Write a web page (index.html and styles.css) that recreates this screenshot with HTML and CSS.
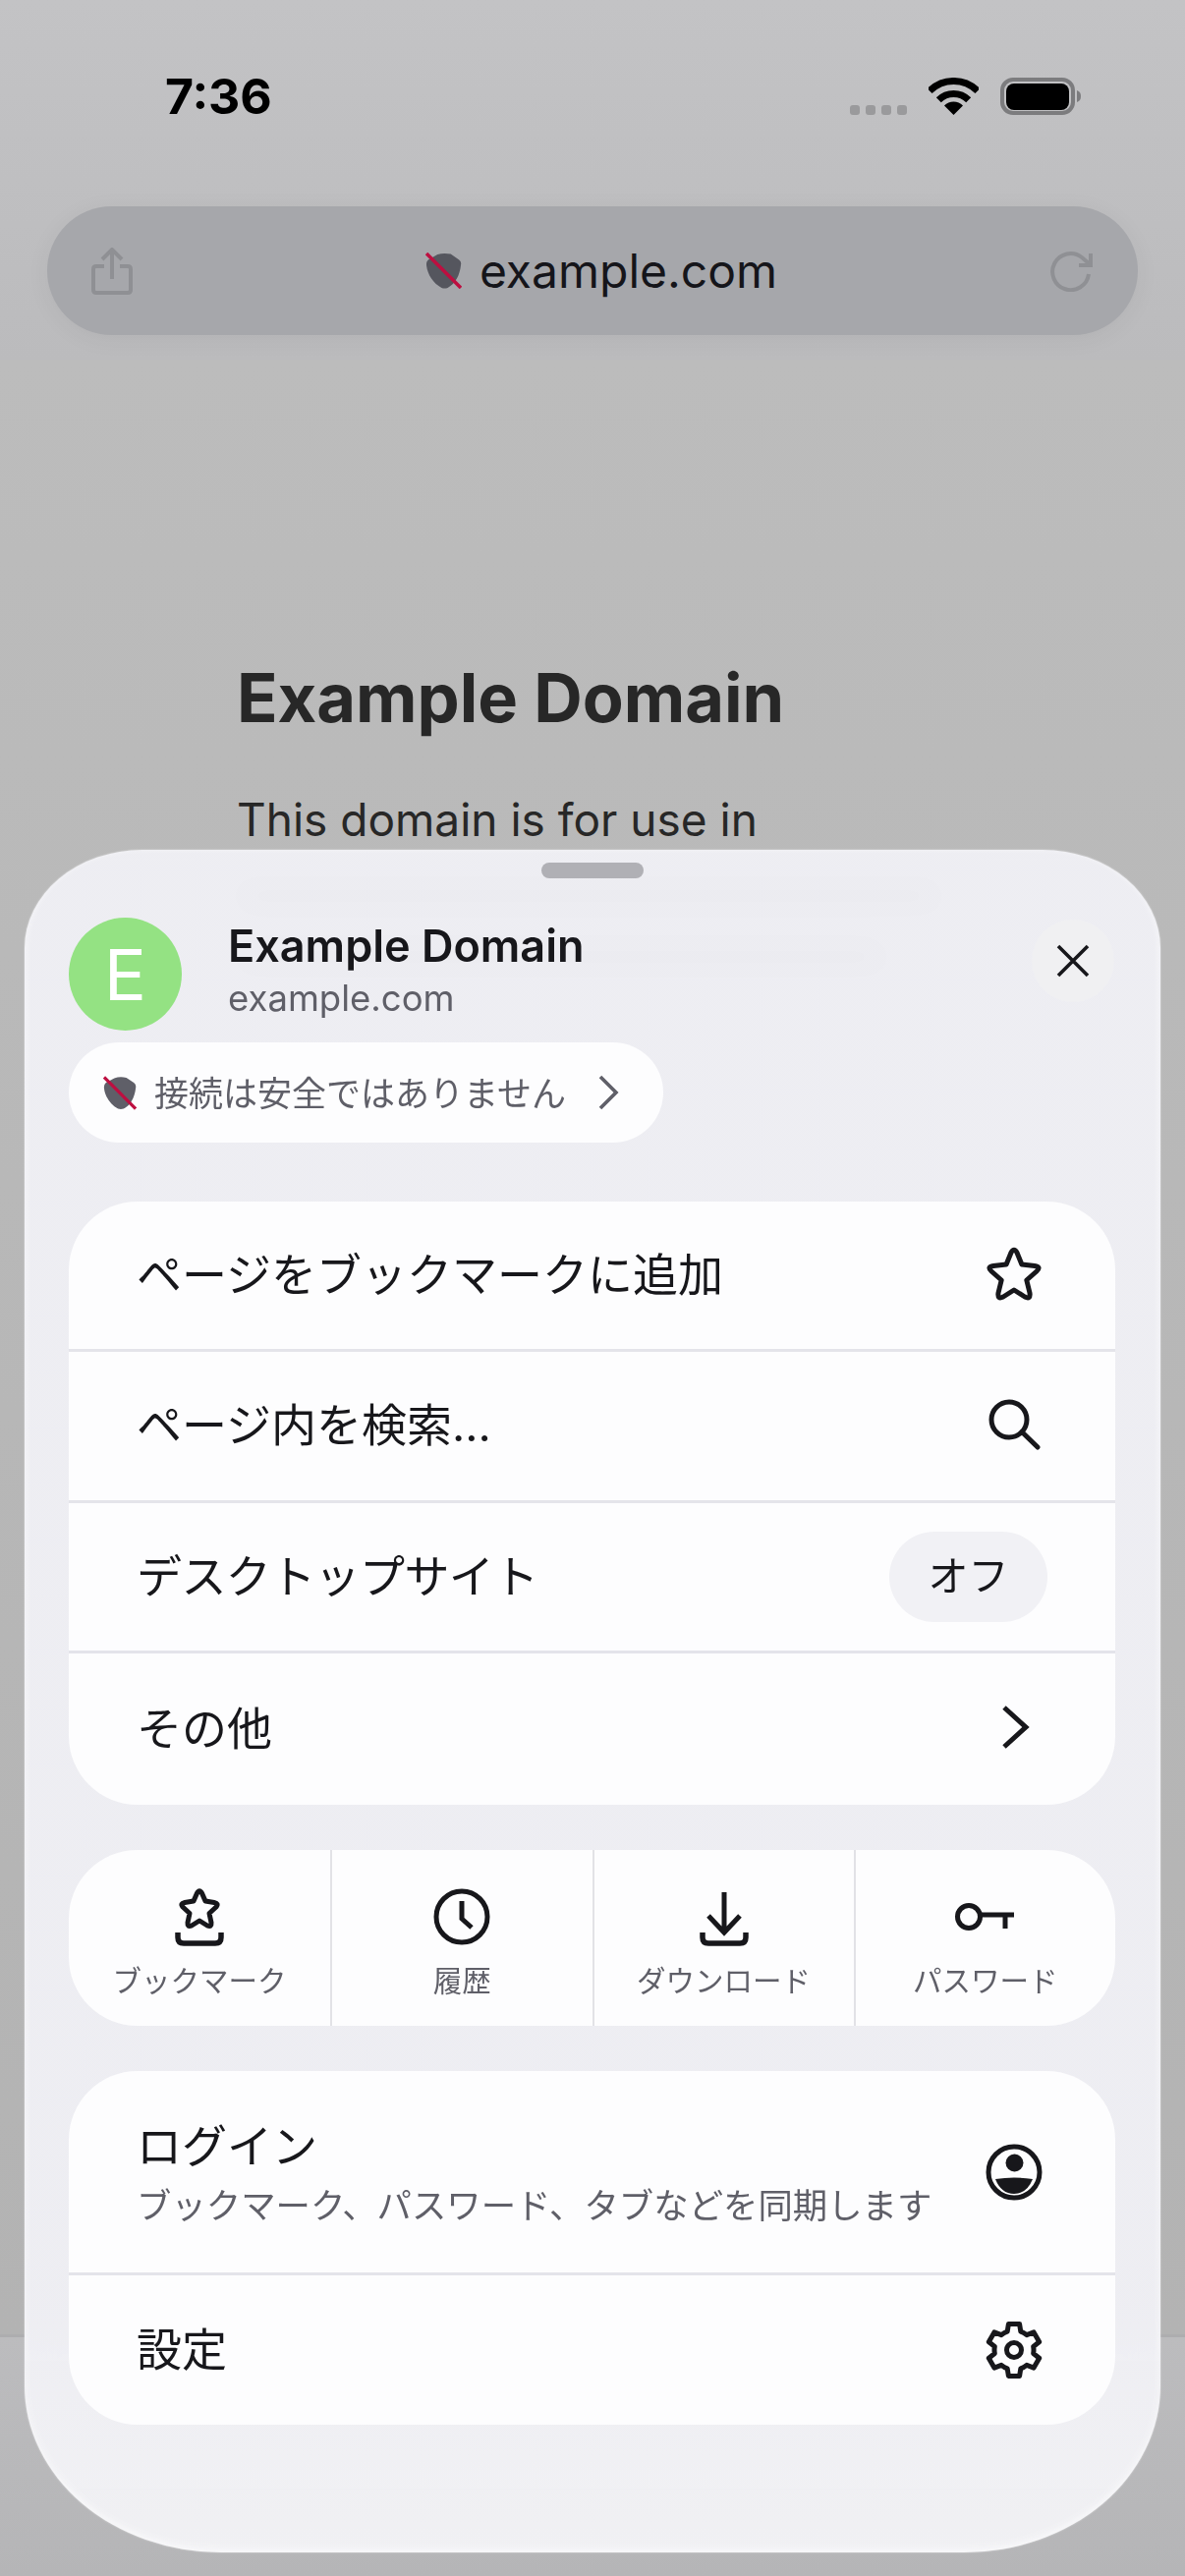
FILE: index.html
```html
<!DOCTYPE html>
<html lang="ja">

<head>
    <meta charset="UTF-8">
    <meta name="viewport" content="width=device-width, initial-scale=1.0">
    <title>Example Domain</title>
    <link rel="stylesheet" href="styles.css">
</head>

<body>
    <svg class="defs" width="0" height="0">
        <symbol id="shield" viewBox="0 0 36 36">
            <path d="M12 2 Q18 0 25 1.500 L33 7 Q36 9 35 13 C34 22 30 31 22 35 Q19 36 16 35 C8 31 2 22 1 13 Q0.500 9 3 7 Z" fill="currentColor" />
            <path d="M1 1 L35 35" stroke="#bd0f40" stroke-width="3.4" />
        </symbol>
    </svg>

    <div class="page">
        <header class="top-bar">
            <div class="status-bar">
                <span class="time">7:36</span>
                <div class="status-icons">
                    <div class="signal"><i></i><i></i><i></i><i></i></div>
                    <svg width="51" height="38" viewBox="0 0 51 38">
                        <path d="M1.1 13.6 A34.5 34.5 0 0 1 49.9 13.6" fill="none" stroke="#000" stroke-width="7" />
                        <path d="M10.3 22.8 A21.5 21.5 0 0 1 40.7 22.8" fill="none" stroke="#000" stroke-width="7" />
                        <path d="M25.5 38 L16 28.5 A13.4 13.4 0 0 1 35 28.5Z" fill="#000" />
                    </svg>
                    <svg class="battery" width="84" height="38" viewBox="0 0 84 38">
                        <rect x="2" y="2" width="72" height="34" rx="11" fill="none" stroke="#7c7c7e" stroke-width="4" />
                        <rect x="6" y="6" width="64" height="27" rx="8" fill="#000" />
                        <path d="M78 13 C81 14 82 16 82 19 C82 22 81 24 78 25Z" fill="#7c7c7e" />
                    </svg>
                </div>
            </div>
            <div class="url-bar">
                <svg width="42" height="48" viewBox="0 0 42 48" fill="none" stroke="#8f9094" stroke-width="4">
                    <path d="M13 19 H5 Q2 19 2 22 V43 Q2 46 5 46 H37 Q40 46 40 43 V22 Q40 19 37 19 H29" />
                    <path d="M21 32 V3 M11 12 L21 2 L31 12" />
                </svg>
                <div class="url-text">
                    <svg class="shield-url" width="37" height="37"><use href="#shield" /></svg>
                    <span>example.com</span>
                </div>
                <svg width="44" height="42" viewBox="0 0 44 42" fill="none" stroke="#8f9094" stroke-width="4">
                    <path d="M39 24 A18.5 18.5 0 1 1 32 7 L39 13" />
                    <path d="M41 3 V15 H29" />
                </svg>
            </div>
        </header>

        <main class="site">
            <h1>Example Domain</h1>
            <p>This domain is for use in</p>
            <!-- the rest of the paragraph only shows as a blur through the sheet -->
            <div class="ghost ghost-long"></div>
            <div class="ghost ghost-short"></div>
        </main>

        <div class="bottom-bar"></div>
    </div>

    <section class="sheet">
        <div class="handle"></div>

        <div class="sheet-head">
            <div class="avatar">E</div>
            <div class="head-text">
                <div class="head-title">Example Domain</div>
                <div class="head-url">example.com</div>
            </div>
            <button class="close">
                <svg width="34" height="34" viewBox="0 0 34 34" stroke="#17171b" stroke-width="3.6">
                    <path d="M2 2 L32 32 M32 2 L2 32" />
                </svg>
            </button>
        </div>

        <div class="secure-pill">
            <svg class="shield-pill" width="34" height="35"><use href="#shield" /></svg>
            <span>接続は安全ではありません</span>
            <svg width="22" height="36" viewBox="0 0 22 36" fill="none" stroke="#5f5f68" stroke-width="3.6">
                <path d="M3 2 L19 18 L3 34" />
            </svg>
        </div>

        <div class="card card-main">
            <div class="row">
                <span class="row-label">ページをブックマークに追加</span>
                <svg class="ico" width="64" height="64" viewBox="0 0 64 64" fill="none" stroke="#17171b" stroke-width="5" stroke-linejoin="round">
                    <path d="M29 9 Q32 3.500 35 9 L39.900 21 L53 22.500 Q60 23.500 55 28 L44.800 37 L48 50 Q49 57 43 54 L32 47 L21 54 Q15 57 16 50 L19.200 37 L9 28 Q4 23.500 11 22.500 L24.100 21 Z" />
                </svg>
            </div>
            <div class="row">
                <span class="row-label">ページ内を検索...</span>
                <svg class="ico" width="64" height="64" viewBox="0 0 64 64" fill="none" stroke="#17171b" stroke-width="5">
                    <circle cx="27" cy="26" r="18" />
                    <path d="M40 38.500 L56 54" stroke-linecap="round" />
                </svg>
            </div>
            <div class="row">
                <span class="row-label row-tight">デスクトップサイト</span>
                <span class="off">オフ</span>
            </div>
            <div class="row">
                <span class="row-label">その他</span>
                <svg class="ico" width="64" height="64" viewBox="0 0 64 64" fill="none" stroke="#17171b" stroke-width="5">
                    <path d="M22 10 L44 30 L22 50" />
                </svg>
            </div>
        </div>

        <div class="card tabs">
            <div class="tab">
                <svg width="64" height="60" viewBox="0 0 64 60" fill="none" stroke="#17171b" stroke-width="5" stroke-linejoin="round">
                    <path d="M29.500 6 Q32 1.500 34.500 6 L38 14 L47 15.500 Q52 16.500 49 20 L42 26.500 L44 36 Q44.500 41 40 39 L32 34 L24 39 Q19.500 41 20 36 L22 26.500 L15 20 Q12 16.500 17 15.500 L26 14 Z" />
                    <path d="M10 46 V51 Q10 57 16 57 H48 Q54 57 54 51 V46" stroke-width="5.500" />
                </svg>
                <span>ブックマーク</span>
            </div>
            <div class="tab">
                <svg width="64" height="60" viewBox="0 0 64 60" fill="none" stroke="#17171b" stroke-width="5">
                    <circle cx="32" cy="30" r="26" />
                    <path d="M32 14 V32 L42 41" stroke-width="5" />
                </svg>
                <span>履歴</span>
            </div>
            <div class="tab">
                <svg width="64" height="60" viewBox="0 0 64 60" fill="none" stroke="#17171b" stroke-width="5">
                    <path d="M32 5 V44 M16 29 L32 46 L48 29" />
                    <path d="M10 46 V51 Q10 57 16 57 H48 Q54 57 54 51 V46" stroke-width="5.500" />
                </svg>
                <span>ダウンロード</span>
            </div>
            <div class="tab">
                <svg width="64" height="60" viewBox="0 0 64 60" fill="none" stroke="#17171b" stroke-width="5">
                    <circle cx="15" cy="30" r="11.500" />
                    <path d="M26 28 H61 M52 28 V42" />
                </svg>
                <span>パスワード</span>
            </div>
        </div>

        <div class="card card-account">
            <div class="row row-tall">
                <div class="row-text">
                    <span>ログイン</span>
                    <span class="row-sub">ブックマーク、パスワード、タブなどを同期します</span>
                </div>
                <svg class="ico" width="64" height="64" viewBox="0 0 64 64">
                    <circle cx="32" cy="32" r="26" fill="none" stroke="#17171b" stroke-width="5" />
                    <circle cx="32.500" cy="22.500" r="9" fill="#17171b" />
                    <path d="M13 39 Q32 36 51 39 Q45 54 32 54 Q19 54 13 39Z" fill="#17171b" />
                </svg>
            </div>
            <div class="row">
                <span class="row-label">設定</span>
                <svg class="ico" width="64" height="64" viewBox="-2 -2 64 64" fill="none" stroke="#17171b" stroke-width="5" stroke-linejoin="round">
                    <path d="M23.200 11.200 L24.400 3.600 H35.600 L36.800 11.200 A20 20 0 0 1 42.900 14.700 L50.100 11.900 L55.700 21.700 L49.700 26.500 A20 20 0 0 1 49.700 33.500 L55.700 38.300 L50.100 48.100 L42.900 45.300 A20 20 0 0 1 36.800 48.800 L35.600 56.400 H24.400 L23.200 48.800 A20 20 0 0 1 17.100 45.300 L9.900 48.100 L4.300 38.300 L10.300 33.500 A20 20 0 0 1 10.300 26.500 L4.300 21.700 L9.900 11.900 L17.100 14.700 A20 20 0 0 1 23.200 11.200Z" />
                    <circle cx="30" cy="30" r="7.500" />
                </svg>
            </div>
        </div>
    </section>
</body>

</html>
```

FILE: styles.css
```css
* {
    box-sizing: border-box;
}

html,
body {
    margin: 0;
    padding: 0;
}

body {
    position: relative;
    width: 1206px;
    height: 2622px;
    overflow: hidden;
    font-family: Inter, "Noto Sans CJK JP", sans-serif;
    color: #17171b;
    background-color: #b8b8b8;
}

.defs {
    display: block;
    height: 0;
}

.page {
    display: flex;
    flex-direction: column;
    height: 2622px;
}

.top-bar {
    height: 366px;
    padding: 0 48px;
    background: linear-gradient(#c3c3c5, #bbbbbd);
}

.status-bar {
    display: flex;
    justify-content: space-between;
    align-items: center;
    height: 78px;
    margin-top: 59px;
    padding: 0 58px 0 120px;
}

.time {
    font-size: 50px;
    font-weight: 700;
    color: #000;
}

.status-icons {
    display: flex;
    align-items: center;
    gap: 22px;
}

.signal {
    display: flex;
    gap: 6px;
    margin-top: 28px;
}

.signal i {
    width: 10px;
    height: 10px;
    border-radius: 3px;
    background-color: #9a9a9c;
}

.battery {
    margin-right: -2px;
}

.url-bar {
    display: flex;
    justify-content: space-between;
    align-items: center;
    height: 131px;
    margin-top: 73px;
    padding: 0 45px;
    border-radius: 66px;
    background-color: #a6a7ab;
    box-shadow: 0 4px 24px rgba(0, 0, 0, 0.05);
}

.url-text {
    display: flex;
    align-items: center;
    gap: 18px;
    margin-left: 20px;
    font-size: 48px;
    color: #15151a;
}

.shield-url {
    color: #55565e;
}

.site {
    flex: 1;
    padding: 0 241px;
    color: #272727;
    background: linear-gradient(#bcbcbc, #b9b9b9 30%, #b3b3b3);
}

.site h1 {
    margin: 300px 0 0;
    font-size: 68.5px;
    font-weight: 700;
    line-height: 90px;
}

.site p {
    margin: 47px 0 0;
    font-size: 46px;
    line-height: 62px;
}

.ghost {
    height: 30px;
    margin-top: 32px;
    background-color: #777;
}

.ghost-long {
    width: 716px;
}

.ghost-short {
    width: 660px;
}

.bottom-bar {
    height: 246px;
    border-top: 3px solid #adadaf;
    background: linear-gradient(#bcbcbe, #b5b5b7);
}

/* sheet */
.sheet {
    position: absolute;
    left: 25px;
    top: 865px;
    width: 1156px;
    height: 1733px;
    padding: 13px 45px 0;
    border-radius: 120px 120px 200px 200px / 100px 100px 170px 170px;
    background: linear-gradient(rgba(240, 240, 245, 0.96) 85%, rgba(242, 242, 245, 0.97));
    backdrop-filter: blur(14px);
    box-shadow: 0 0 2px rgba(255, 255, 255, 0.6), inset 0 -3px 8px rgba(255, 255, 255, 0.6);
}

.handle {
    width: 104px;
    height: 16px;
    margin: 0 auto;
    border-radius: 8px;
    background-color: #b0b0b5;
}

.sheet-head {
    display: flex;
    align-items: center;
    margin-top: 40px;
}

.avatar {
    display: flex;
    align-items: center;
    justify-content: center;
    width: 115px;
    height: 115px;
    border-radius: 50%;
    font-size: 72px;
    color: #fff;
    background-color: #94e283;
}

.head-text {
    flex: 1;
    margin: -7px 0 0 47px;
}

.head-title {
    font-size: 45px;
    font-weight: 600;
    line-height: 54px;
}

.head-url {
    margin-top: 1px;
    font-size: 36.5px;
    line-height: 50px;
    color: #5f5f68;
}

.close {
    display: flex;
    align-items: center;
    justify-content: center;
    width: 84px;
    height: 84px;
    margin-right: 2px;
    margin-bottom: 28px;
    padding: 0;
    border: none;
    border-radius: 50%;
    background-color: #f0f0f2;
}

.secure-pill {
    display: inline-flex;
    align-items: center;
    gap: 18px;
    width: 605px;
    height: 102px;
    margin-top: 12px;
    padding-left: 35px;
    border-radius: 51px;
    font-size: 35px;
    color: #5f5f68;
    background-color: #fdfdfe;
}

.shield-pill {
    color: #5f5f68;
}

.secure-pill span {
    margin-right: 14px;
    margin-bottom: 3px;
}

.card {
    width: 1065px;
    margin-top: 46px;
    border-radius: 70px;
    background-color: #fdfdfe;
    overflow: hidden;
}

.secure-pill + .card {
    margin-top: 60px;
}

.row {
    display: flex;
    justify-content: space-between;
    align-items: center;
    height: 153.5px;
    padding: 0 71px 0 69px;
    border-top: 3px solid #e4e4ea;
    font-size: 46px;
}

.row:first-child {
    height: 150px;
    border-top: none;
}

.row-tall:first-child {
    height: 205px;
}

.card-main .row:last-child {
    height: 157px;
}

.card-account .row:last-child {
    height: 155px;
}

.row-label {
    margin-bottom: 8px;
}

.row-tight {
    letter-spacing: -0.6px;
}

.row-text {
    display: flex;
    flex-direction: column;
    gap: 3px;
    margin-top: -6px;
}

.row-sub {
    font-size: 35.4px;
    color: #5f5f68;
}

.off {
    width: 161px;
    height: 92px;
    margin-right: -2px;
    border-radius: 46px;
    font-size: 41px;
    line-height: 90px;
    text-align: center;
    background-color: #f1f1f5;
}

.tabs {
    display: grid;
    grid-template-columns: repeat(4, 1fr);
    height: 179px;
}

.tab {
    display: flex;
    flex-direction: column;
    align-items: center;
    padding-top: 38px;
    border-left: 2px solid #e2e2e6;
    font-size: 29.5px;
    color: #5f5f68;
}

.tab:first-child {
    border-left: none;
}

.tab span {
    margin-top: 12px;
}
```
